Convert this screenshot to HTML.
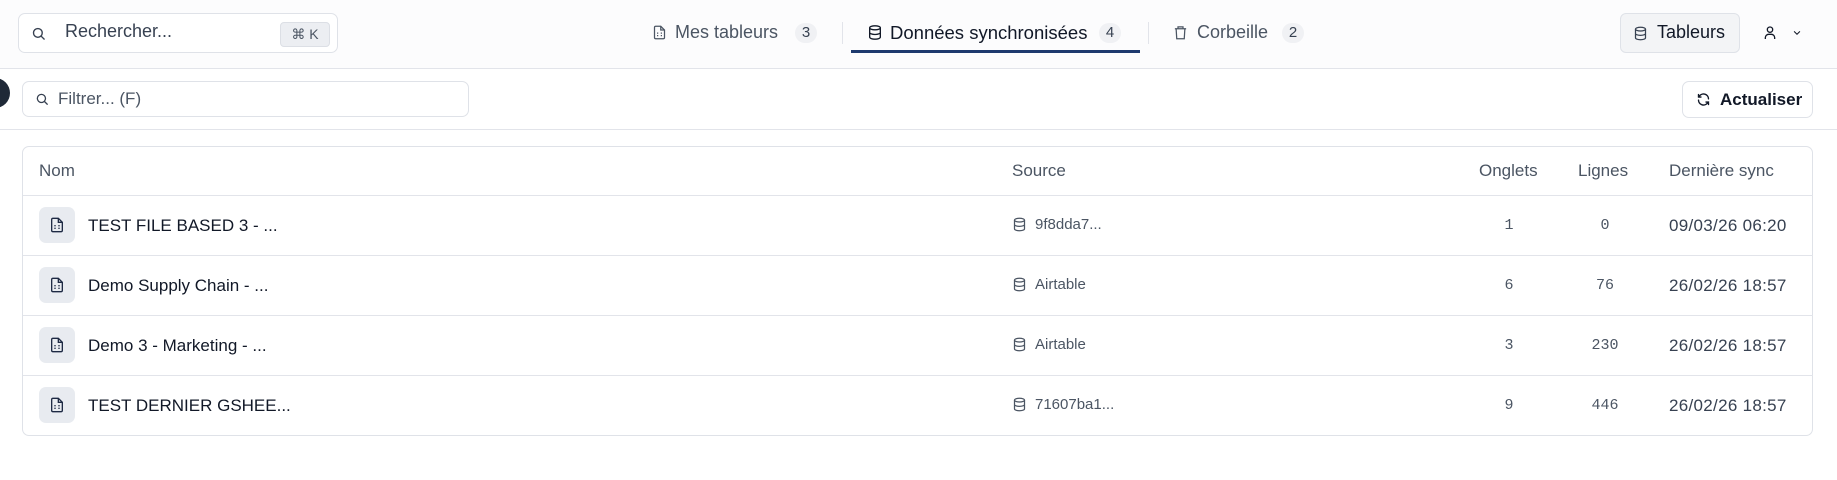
<!DOCTYPE html>
<html><head><meta charset="utf-8"><style>
*{box-sizing:border-box;margin:0;padding:0}
body{width:1837px;height:480px;overflow:hidden;background:#fff;font-family:"Liberation Sans",sans-serif;position:relative;color:#111827}
.a{position:absolute}
.hdr{left:0;top:0;width:1837px;height:69px;background:#fcfcfd;border-bottom:1px solid #e2e4ea}
.box{border:1px solid #dfe2e8;border-radius:7px;background:#fff}
.t{white-space:nowrap}
.badge{background:#f0f1f4;border-radius:11px;height:20px;width:22px;text-align:center;line-height:20px;font-size:15px;color:#374151}
svg{display:block}
.hd{font-size:17px;color:#4b5563}
.rowb{left:23px;width:1790px;height:1px;background:#e2e4ea}
.nm{font-size:17px;color:#111827}
.src{font-size:15px;color:#4b5563}
.mono{font-family:"Liberation Mono",monospace;font-size:15px;color:#4b5563;text-align:center;width:60px}
.dt{font-size:17px;color:#374151;letter-spacing:0.3px}
.ib{width:36px;height:36px;border-radius:7px;background:#e8ebf0}
</style></head><body>
<div class="a hdr"></div>
<div class="a box" style="left:18px;top:13px;width:320px;height:40px;border-radius:7px"></div>
<svg class="a" style="left:31px;top:26px" width="15" height="15" viewBox="0 0 24 24" fill="none" stroke="#374151" stroke-width="2.2" stroke-linecap="round"><circle cx="11" cy="11" r="7"/><path d="M16.5 16.5L21 21"/></svg>
<div class="a t" style="left:65px;top:21px;font-size:18px;color:#374151">Rechercher...</div>
<div class="a" style="left:280px;top:22px;width:50px;height:25px;background:#eceef2;border:1px solid #dcdfe5;border-radius:4px;font-size:14px;color:#4b5563;line-height:23px;text-align:center">⌘ K</div>

<svg class="a" style="left:652px;top:24px" width="15" height="17" viewBox="0 0 24 24" fill="none" stroke="#4b5563" stroke-width="2"><path d="M14 2H6a2 2 0 0 0-2 2v16a2 2 0 0 0 2 2h12a2 2 0 0 0 2-2V8z"/><path d="M14 2v6h6M8 13h2M14 13h2M8 17h2M14 17h2"/></svg>
<div class="a t" style="left:675px;top:22px;font-size:18px;color:#4b5563">Mes tableurs</div>
<div class="a badge" style="left:795px;top:23px">3</div>
<div class="a" style="left:842px;top:22px;width:1px;height:22px;background:#e2e4ea"></div>
<svg class="a" style="left:867px;top:24px" width="16" height="17" viewBox="0 0 24 24" fill="none" stroke="#111827" stroke-width="2"><ellipse cx="12" cy="5" rx="8" ry="3"/><path d="M4 5v14c0 1.7 3.6 3 8 3s8-1.3 8-3V5M4 12c0 1.7 3.6 3 8 3s8-1.3 8-3"/></svg>
<div class="a t" style="left:890px;top:22px;font-size:18.5px;color:#111827">Données synchronisées</div>
<div class="a badge" style="left:1099px;top:23px">4</div>
<div class="a" style="left:851px;top:50px;width:289px;height:3px;background:#1e3a6e"></div>
<div class="a" style="left:1148px;top:22px;width:1px;height:22px;background:#e2e4ea"></div>
<svg class="a" style="left:1173px;top:24px" width="15" height="17" viewBox="0 0 24 24" fill="none" stroke="#4b5563" stroke-width="2"><path d="M3 6h18M8 6V3h8v3M5 6l1 16h12l1-16"/></svg>
<div class="a t" style="left:1197px;top:22px;font-size:18px;color:#4b5563">Corbeille</div>
<div class="a badge" style="left:1282px;top:23px">2</div>

<div class="a" style="left:1620px;top:13px;width:120px;height:40px;background:#f3f4f6;border:1px solid #dfe2e8;border-radius:6px"></div>
<svg class="a" style="left:1633px;top:26px" width="15" height="15" viewBox="0 0 24 24" fill="none" stroke="#374151" stroke-width="2"><ellipse cx="12" cy="5" rx="8" ry="3"/><path d="M4 5v14c0 1.7 3.6 3 8 3s8-1.3 8-3V5M4 12c0 1.7 3.6 3 8 3s8-1.3 8-3"/></svg>
<div class="a t" style="left:1657px;top:22px;font-size:18px;color:#111827">Tableurs</div>
<svg class="a" style="left:1762px;top:25px" width="16" height="16" viewBox="0 0 24 24" fill="none" stroke="#111827" stroke-width="2"><circle cx="12" cy="7" r="4"/><path d="M5 21v-2a5 5 0 0 1 5-5h4a5 5 0 0 1 5 5v2"/></svg>
<svg class="a" style="left:1791px;top:28px" width="12" height="10" viewBox="0 0 24 24" fill="none" stroke="#111827" stroke-width="2.5"><path d="M5 8l7 7 7-7"/></svg>

<div class="a" style="left:-20px;top:78px;width:30px;height:30px;border-radius:50%;background:#1f2937"></div>
<div class="a box" style="left:22px;top:81px;width:447px;height:36px"></div>
<svg class="a" style="left:35px;top:92px" width="14" height="14" viewBox="0 0 24 24" fill="none" stroke="#374151" stroke-width="2.2" stroke-linecap="round"><circle cx="11" cy="11" r="7"/><path d="M16.5 16.5L21 21"/></svg>
<div class="a t" style="left:58px;top:89px;font-size:17px;color:#4b5563">Filtrer... (F)</div>
<div class="a box" style="left:1682px;top:81px;width:131px;height:37px"></div>
<svg class="a" style="left:1696px;top:92px" width="15" height="15" viewBox="0 0 24 24" fill="none" stroke="#111827" stroke-width="2.2" stroke-linecap="round"><path d="M20 11a8 8 0 0 0-14.5-4.5L4 8M4 4v4h4M4 13a8 8 0 0 0 14.5 4.5L20 16M20 20v-4h-4"/></svg>
<div class="a t" style="left:1720px;top:90px;font-size:17px;color:#111827;font-weight:bold">Actualiser</div>
<div class="a" style="left:0;top:129px;width:1837px;height:1px;background:#e2e4ea"></div>

<div class="a box" style="left:22px;top:146px;width:1791px;height:290px;border-radius:7px"></div>
<div class="a t hd" style="left:39px;top:161px">Nom</div>
<div class="a t hd" style="left:1012px;top:161px">Source</div>
<div class="a t hd" style="left:1479px;top:161px">Onglets</div>
<div class="a t hd" style="left:1578px;top:161px">Lignes</div>
<div class="a t hd" style="left:1669px;top:161px">Dernière sync</div>
<div class="a rowb" style="top:195px"></div>
<div class="a rowb" style="top:255px"></div>
<div class="a rowb" style="top:315px"></div>
<div class="a rowb" style="top:375px"></div>

<div class="a ib" style="left:39px;top:207px"></div>
<div class="a ib" style="left:39px;top:267px"></div>
<div class="a ib" style="left:39px;top:327px"></div>
<div class="a ib" style="left:39px;top:387px"></div>
<svg width="0" height="0" style="position:absolute"><defs><g id="fi" fill="none" stroke="#1e2a44" stroke-width="2"><path d="M14 2H6a2 2 0 0 0-2 2v16a2 2 0 0 0 2 2h12a2 2 0 0 0 2-2V8z"/><path d="M14 2v6h6M8 13h2M14 13h2M8 17h2M14 17h2"/></g><g id="db" fill="none" stroke="#4b5563" stroke-width="2"><ellipse cx="12" cy="5" rx="8" ry="3"/><path d="M4 5v14c0 1.7 3.6 3 8 3s8-1.3 8-3V5M4 12c0 1.7 3.6 3 8 3s8-1.3 8-3"/></g></defs></svg>
<svg class="a" style="left:49px;top:217px" width="16" height="16" viewBox="0 0 24 24"><use href="#fi"/></svg>
<svg class="a" style="left:49px;top:277px" width="16" height="16" viewBox="0 0 24 24"><use href="#fi"/></svg>
<svg class="a" style="left:49px;top:337px" width="16" height="16" viewBox="0 0 24 24"><use href="#fi"/></svg>
<svg class="a" style="left:49px;top:397px" width="16" height="16" viewBox="0 0 24 24"><use href="#fi"/></svg>
<div class="a t nm" style="left:88px;top:216px">TEST FILE BASED 3 - ...</div>
<div class="a t nm" style="left:88px;top:276px">Demo Supply Chain - ...</div>
<div class="a t nm" style="left:88px;top:336px">Demo 3 - Marketing - ...</div>
<div class="a t nm" style="left:88px;top:396px">TEST DERNIER GSHEE...</div>

<svg class="a" style="left:1012px;top:217px" width="15" height="15" viewBox="0 0 24 24"><use href="#db"/></svg>
<svg class="a" style="left:1012px;top:277px" width="15" height="15" viewBox="0 0 24 24"><use href="#db"/></svg>
<svg class="a" style="left:1012px;top:337px" width="15" height="15" viewBox="0 0 24 24"><use href="#db"/></svg>
<svg class="a" style="left:1012px;top:397px" width="15" height="15" viewBox="0 0 24 24"><use href="#db"/></svg>
<div class="a t src" style="left:1035px;top:216px">9f8dda7...</div>
<div class="a t src" style="left:1035px;top:276px">Airtable</div>
<div class="a t src" style="left:1035px;top:336px">Airtable</div>
<div class="a t src" style="left:1035px;top:396px">71607ba1...</div>

<div class="a mono" style="left:1479px;top:217px">1</div>
<div class="a mono" style="left:1479px;top:277px">6</div>
<div class="a mono" style="left:1479px;top:337px">3</div>
<div class="a mono" style="left:1479px;top:397px">9</div>
<div class="a mono" style="left:1575px;top:217px">0</div>
<div class="a mono" style="left:1575px;top:277px">76</div>
<div class="a mono" style="left:1575px;top:337px">230</div>
<div class="a mono" style="left:1575px;top:397px">446</div>
<div class="a t dt" style="left:1669px;top:216px">09/03/26 06:20</div>
<div class="a t dt" style="left:1669px;top:276px">26/02/26 18:57</div>
<div class="a t dt" style="left:1669px;top:336px">26/02/26 18:57</div>
<div class="a t dt" style="left:1669px;top:396px">26/02/26 18:57</div>
</body></html>
